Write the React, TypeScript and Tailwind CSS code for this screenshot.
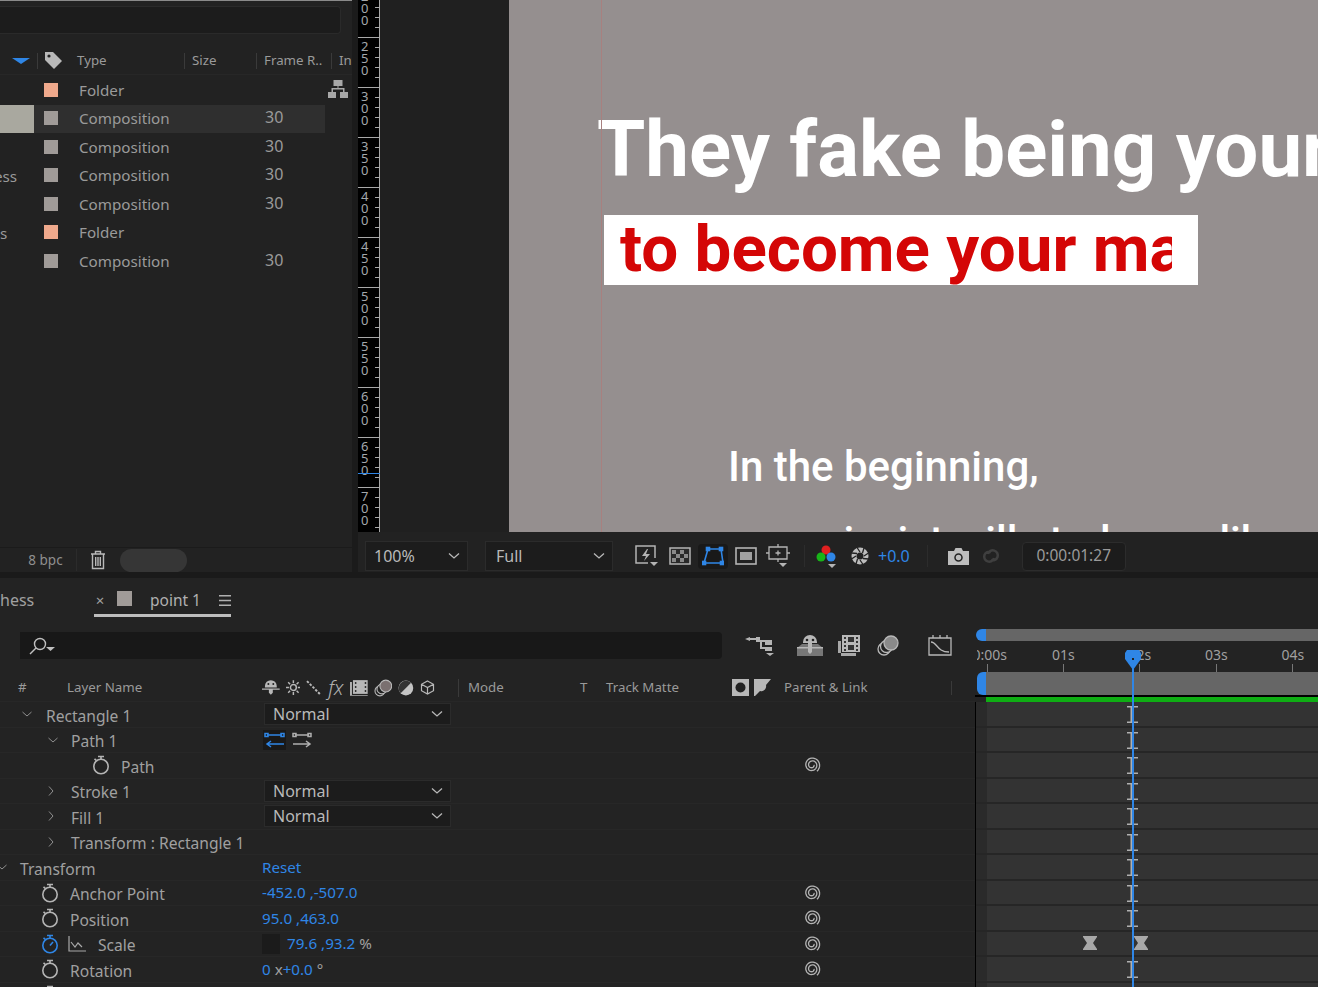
import type { ReactNode } from "react";

const GREY = "#b4b4b4";
const BLUE = "#2f86e6";

// spiral used by the pick whip column
const spiralD = Array.from({ length: 60 }, (_, i) => {
  const t = i / 59;
  const a = -0.9 + t * Math.PI * 4.3;
  const r = 8 - t * 6;
  return `${i === 0 ? "M" : "L"}${(9 + r * Math.cos(a)).toFixed(2)} ${(9 + r * Math.sin(-a)).toFixed(2)}`;
}).join(" ");

function Spiral() {
  return (
    <svg width="18" height="18" viewBox="0 0 18 18" fill="none" stroke={GREY} strokeWidth="1.3">
      <path d={spiralD} />
    </svg>
  );
}

function Stopwatch({ color = GREY }: { color?: string }) {
  return (
    <svg width="18" height="20" viewBox="0 0 18 20" fill="none" stroke={color} strokeWidth="1.6">
      <circle cx="9" cy="11.5" r="7.2" />
      <path d="M6 1.5h6M9 1.5v3M2.5 3.8l1.8 1.6" />
      {color !== GREY && <path d="M9 11.5l3-3.5" />}
    </svg>
  );
}

function Chevron({ dir, className = "" }: { dir: "down" | "right"; className?: string }) {
  return (
    <svg width="12" height="10" viewBox="0 0 12 10" fill="none" stroke="#8f8f8f" strokeWidth="1" className={className}>
      {dir === "down" ? <path d="M1.5 3l4.5 4 4.5-4" /> : <path d="M4 .5l4 4.5-4 4.5" />}
    </svg>
  );
}

function DropChevron() {
  return (
    <svg width="12" height="8" viewBox="0 0 12 8" fill="none" stroke="#b8b8b8" strokeWidth="1.3">
      <path d="M1 1.5l5 4.5 5-4.5" />
    </svg>
  );
}

function Select({ label, className }: { label: string; className: string }) {
  return (
    <div className={`flex items-center justify-between border border-[#2b2b2b] bg-[#1c1c1c] text-[16px] text-[#b9b9b9] ${className}`}>
      <span>{label}</span>
      <DropChevron />
    </div>
  );
}

// ------------------------------------------------------------------ project panel

const projectRows = [
  { cut: "", cutClass: "", type: "Folder", color: "bg-[#efa98c]", rate: "", tree: true },
  { cut: "", cutClass: "", type: "Composition", color: "bg-[#a09b98]", rate: "30", selected: true },
  { cut: "", cutClass: "", type: "Composition", color: "bg-[#a09b98]", rate: "30" },
  { cut: "ess", cutClass: "-ml-[6px]", type: "Composition", color: "bg-[#a09b98]", rate: "30" },
  { cut: "", cutClass: "", type: "Composition", color: "bg-[#a09b98]", rate: "30" },
  { cut: "s", cutClass: "", type: "Folder", color: "bg-[#efa98c]", rate: "" },
  { cut: "", cutClass: "", type: "Composition", color: "bg-[#a09b98]", rate: "30" },
];

function ProjectPanel() {
  return (
    <div className="flex w-[352px] flex-col border-t border-[#8a8a8a] bg-[#222222]">
      <div className="mt-[5px] h-[28px] w-[341px] rounded-r-sm border border-l-0 border-[#2a2a2a] bg-[#1c1c1c]" />
      <div className="mt-[13px] flex h-[28px] items-center overflow-hidden border-b border-[#272727] text-[13.3px] whitespace-nowrap text-[#9a9a9a]">
        <svg width="18" height="6" viewBox="0 0 18 6" className="ml-[12px] shrink-0">
          <path d="M0 0h18l-9 6z" fill={BLUE} />
        </svg>
        <div className="ml-[7px] h-[16px] w-px bg-[#3a3a3a]" />
        <svg width="19" height="19" viewBox="0 0 19 19" className="ml-[6px] shrink-0">
          <path d="M1 1h8l9 9-8 8-9-9z" fill="#b8b8b8" />
          <circle cx="5" cy="5" r="1.6" fill="#222" />
        </svg>
        <span className="ml-[14px] w-[107px] shrink-0">Type</span>
        <div className="h-[16px] w-px shrink-0 bg-[#3a3a3a]" />
        <span className="ml-[7px] w-[64px] shrink-0">Size</span>
        <div className="h-[16px] w-px shrink-0 bg-[#3a3a3a]" />
        <span className="ml-[7px] w-[67px] shrink-0">Frame R..</span>
        <div className="h-[16px] w-px shrink-0 bg-[#3a3a3a]" />
        <span className="ml-[7px]">In</span>
      </div>
      <div className="mt-[1px]">
        {projectRows.map((row, i) => (
          <div key={i} className="flex h-[28.5px] items-center text-[15.2px] text-[#9a9a9a]">
            <div className={`h-full w-[34px] shrink-0 overflow-hidden ${row.selected ? "bg-[#a9a89f]" : ""}`}>
              <div className={`leading-[28px] ${row.cutClass}`}>{row.cut}</div>
            </div>
            <div className={`flex h-full w-[291px] shrink-0 items-center ${row.selected ? "bg-[#2f2f2f]" : ""}`}>
              <div className={`-mt-[1px] ml-[10px] size-[14px] shrink-0 ${row.color}`} />
              <span className="ml-[21px] w-[186px] shrink-0">{row.type}</span>
              <span className="-mt-[3px] text-[16px]">{row.rate}</span>
            </div>
            {row.tree && (
              <svg width="20" height="18" viewBox="0 0 20 18" fill="#a8a8a8" className="-mt-[2px] ml-[3px] shrink-0">
                <path d="M5.500 0h9v6h-9zM0 12h8v6H0zM12 12h8v6h-8z" />
                <path d="M9.500 5h1v3h6v4h-1.500V9.500H5V12H3.500V8h6z" />
              </svg>
            )}
          </div>
        ))}
      </div>
      <div className="mt-auto flex h-[25px] items-center border-t border-[#1b1b1b]">
        <div className="ml-[15px] flex h-[22px] w-[62px] items-center justify-center border-r border-[#2b2b2b] text-[13.5px] text-[#8f8f8f]">
          8 bpc
        </div>
        <svg width="16" height="20" viewBox="0 0 16 20" fill="none" stroke="#b8b8b8" strokeWidth="1.4" className="ml-[13px]">
          <path d="M1 4h14M5.500 4V1.500h5V4M2.500 4v14.500h11V4M5.700 7v9M8 7v9M10.300 7v9" />
        </svg>
        <div className="ml-[14px] h-[23px] w-[67px] rounded-full bg-[#363636]" />
      </div>
    </div>
  );
}

// ------------------------------------------------------------------ viewer

const rulerMarks = ["200", "250", "300", "350", "400", "450", "500", "550", "600", "650", "700"];

function Ruler() {
  return (
    <div className="relative h-full w-[22px] shrink-0 overflow-hidden bg-black">
      <div className="-mt-[13px]">
        {rulerMarks.map((mark) => (
          <div key={mark} className="flex h-[50px] justify-between border-t border-r border-[#a8a8a8]">
            <div className="ml-[3px] pt-[2px] font-['Noto_Sans'] text-[13px] leading-[12px] text-[#a3a7ab]">
              {mark.split("").map((d, i) => (
                <div key={i}>{d}</div>
              ))}
            </div>
            <div className="flex flex-col items-end">
              {[0, 1, 2, 3].map((t) => (
                <div key={t} className="mt-[9px] h-px w-[4px] bg-[#a8a8a8]" />
              ))}
            </div>
          </div>
        ))}
      </div>
      <div className="absolute top-[473px] left-0 h-px w-full bg-[#2f86e6]" />
    </div>
  );
}

function Preview() {
  return (
    <div className="relative h-full flex-1 overflow-hidden bg-[#958f8f] font-['Roboto'] whitespace-nowrap">
      <div className="absolute top-0 left-[92px] h-full w-px bg-[#a8807f]" />
      <div className="ml-[88px] pt-[103px] text-[78px] leading-[94px] font-bold text-white">They fake being your</div>
      <div className="mt-[18px] ml-[95px] h-[70px] w-[594px] bg-white pl-[16px]">
        <div className="h-full w-[552px] overflow-hidden text-[65.5px] leading-[68px] font-bold text-[#d40606]">
          to become your manager
        </div>
      </div>
      <div className="mt-[157px] ml-[219px] text-[42px] leading-[50px] font-medium text-white">In the beginning,</div>
      <div className="mt-[25px] ml-[219px] text-[42px] leading-[50px] font-medium text-white">a narcissist will study you like a</div>
    </div>
  );
}

function ViewerToolbar() {
  return (
    <div className="flex h-[40px] items-center bg-[#222222] pt-[8px] font-['Noto_Sans'] whitespace-nowrap">
      <Select label="100%" className="ml-[7px] h-[30px] w-[103px] pr-[7px] pl-[8px]" />
      <Select label="Full" className="ml-[17px] h-[30px] w-[128px] pr-[7px] pl-[10px]" />
      <svg width="24" height="24" viewBox="0 0 24 24" fill="none" stroke={GREY} strokeWidth="1.500" className="ml-[21px]">
        <path d="M14 19H2V2h19v12" />
        <path d="M13 5l-5 7h4l-2 5 6-7h-4l2-5z" fill={GREY} stroke="none" />
        <path d="M16 18h8l-4 4z" fill={GREY} stroke="none" />
      </svg>
      <svg width="22" height="18" viewBox="0 0 22 18" className="ml-[11px]">
        <rect x="1" y="1" width="20" height="16" fill="#2a2a2a" stroke={GREY} strokeWidth="1.5" />
        <path d="M3 3h4v4H3zM11 3h4v4h-4zM7 7h4v4H7zM15 7h4v4h-4zM3 11h4v4H3zM11 11h4v4h-4z" fill="#8a8a8a" />
      </svg>
      <div className="ml-[7px] flex h-[25px] w-[30px] items-center justify-center rounded-sm bg-[#191919]">
        <svg width="22" height="20" viewBox="0 0 22 20" fill="none" stroke={BLUE} strokeWidth="1.600">
          <path d="M6 3h13l2 14H2z" />
          <g fill={BLUE}>
            <rect x="4.500" y="1.500" width="3" height="3" />
            <rect x="17.500" y="1.500" width="3" height="3" />
            <rect x="0.500" y="15.500" width="3" height="3" />
            <rect x="18.500" y="15.500" width="3" height="3" />
          </g>
        </svg>
      </div>
      <svg width="22" height="18" viewBox="0 0 22 18" className="ml-[7px]">
        <rect x="1" y="1" width="20" height="16" fill="none" stroke={GREY} strokeWidth="1.600" />
        <rect x="5" y="5" width="12" height="8" fill="#a0a0a0" />
      </svg>
      <svg width="24" height="24" viewBox="0 0 24 24" fill="none" stroke={GREY} strokeWidth="1.300" className="ml-[9px]">
        <path d="M3 3h18v12H3zM12 0v3M12 15v3M0 9h3M21 9h3M9.500 9h5M12 6.500v5" />
        <path d="M13 19h8l-4 4z" fill={GREY} stroke="none" />
      </svg>
      <div className="ml-[14px] h-[22px] w-px bg-[#2c2c2c]" />
      <svg width="24" height="24" viewBox="0 0 24 24" className="ml-[10px]">
        <circle cx="11" cy="6" r="4.500" fill="#e02020" />
        <circle cx="6" cy="13" r="4.500" fill="#18b418" />
        <circle cx="16" cy="13" r="4.500" fill="#2f86e6" />
        <path d="M13 20h8l-4 4z" fill={GREY} />
      </svg>
      <svg width="18" height="18" viewBox="0 0 18 18" className="ml-[12px]">
        <circle cx="9" cy="9" r="8.500" fill="#bdbdbd" />
        <path d="M9 5L6 .5M13 9l4.500-3M9 13l3 4.500M5 9l-4.500 3M6 6.500L.5 6M12 11.500l5.500.5M11.500 6L13 1M6.500 12L5 17" stroke="#222" strokeWidth="1.300" />
        <circle cx="9" cy="9" r="3.500" fill="#222" />
      </svg>
      <span className="ml-[9px] text-[16px] text-[#2f86e6]">+0.0</span>
      <div className="ml-[17px] h-[22px] w-px bg-[#2c2c2c]" />
      <svg width="21" height="17" viewBox="0 0 21 17" className="ml-[20px]">
        <path d="M0 3h6l1.500-3h6L15 3h6v14H0z" fill="#bdbdbd" />
        <circle cx="10.500" cy="9.500" r="3.500" fill="none" stroke="#222" strokeWidth="1.500" />
      </svg>
      <svg width="22" height="20" viewBox="0 0 22 20" fill="none" stroke="#3f3f3f" strokeWidth="2.500" className="ml-[11px]">
        <path d="M8 8a5 5 0 1 1 3 6M14 12a5 5 0 1 1-3-6" />
      </svg>
      <div className="ml-[20px] flex h-[29px] w-[104px] items-center justify-center rounded-sm border border-[#2c2c2c] bg-[#1c1c1c] text-[15.500px] text-[#9a9a9a]">
        0:00:01:27
      </div>
    </div>
  );
}

// ------------------------------------------------------------------ timeline

type LayerRow = {
  label: string;
  pad: string;
  textMl: string;
  chevron?: "down" | "right";
  chevronClass?: string;
  watch?: boolean;
  graph?: boolean;
  value?: ReactNode;
  spiral?: boolean;
};

const blue = "text-[#2f86e6]";

function PathButtons() {
  return (
    <div className="ml-[1px] flex gap-[5px]">
      <svg width="23" height="20" viewBox="0 0 23 20" className="bg-[#191919]">
        <g fill="none" stroke={BLUE} strokeWidth="1.500">
          <path d="M4 5h15" />
          <rect x="2" y="3.500" width="3" height="3" />
          <rect x="18" y="3.500" width="3" height="3" />
          <path d="M21 14H4M8 11l-4 3 4 3" />
        </g>
      </svg>
      <svg width="22" height="20" viewBox="0 0 22 20">
        <g fill="none" stroke="#b0b0b0" strokeWidth="1.500">
          <path d="M4 5h14" />
          <rect x="2" y="3.500" width="3" height="3" />
          <rect x="17" y="3.500" width="3" height="3" />
          <path d="M2 14h17M15 11l4 3-4 3" />
        </g>
      </svg>
    </div>
  );
}

const layerRows: LayerRow[] = [
  { label: "Rectangle 1", pad: "pl-[21px]", textMl: "ml-[13px]", chevron: "down", value: <Select label="Normal" className="ml-[2px] h-[22px] w-[187px] pr-[7px] pl-[8px]" /> },
  { label: "Path 1", pad: "pl-[47px]", textMl: "ml-[12px]", chevron: "down", value: <PathButtons /> },
  { label: "Path", pad: "pl-[92px]", textMl: "ml-[11px]", watch: true, spiral: true },
  { label: "Stroke 1", pad: "pl-[45px]", textMl: "ml-[14px]", chevron: "right", value: <Select label="Normal" className="ml-[2px] h-[22px] w-[187px] pr-[7px] pl-[8px]" /> },
  { label: "Fill 1", pad: "pl-[45px]", textMl: "ml-[14px]", chevron: "right", value: <Select label="Normal" className="ml-[2px] h-[22px] w-[187px] pr-[7px] pl-[8px]" /> },
  { label: "Transform : Rectangle 1", pad: "pl-[45px]", textMl: "ml-[14px]", chevron: "right" },
  { label: "Transform", pad: "pl-0", textMl: "ml-[12px]", chevron: "down", chevronClass: "-ml-[4px]", value: <span className={blue}>Reset</span> },
  { label: "Anchor Point", pad: "pl-[41px]", textMl: "ml-[11px]", watch: true, spiral: true, value: <span className={blue}>-452.0 ,-507.0</span> },
  { label: "Position", pad: "pl-[41px]", textMl: "ml-[11px]", watch: true, spiral: true, value: <span className={blue}>95.0 ,463.0</span> },
  {
    label: "Scale",
    pad: "pl-[41px]",
    textMl: "ml-[12px]",
    watch: true,
    graph: true,
    spiral: true,
    value: (
      <div className="flex items-center">
        <div className="h-[20px] w-[18px] bg-[#1b1b1b]" />
        <span className={`ml-[7px] ${blue}`}>79.6 ,93.2</span>
        <span className="ml-[4px] text-[#a0a0a0]">%</span>
      </div>
    ),
  },
  {
    label: "Rotation",
    pad: "pl-[41px]",
    textMl: "ml-[11px]",
    watch: true,
    spiral: true,
    value: (
      <span>
        <span className={blue}>0</span>
        <span className="text-[#a0a0a0]"> x</span>
        <span className={blue}>+0.0</span>
        <span className="text-[#a0a0a0]"> °</span>
      </span>
    ),
  },
  { label: "", pad: "pl-[41px]", textMl: "ml-[11px]", watch: true },
];

function LayerRowView({ row }: { row: LayerRow }) {
  const isBlueWatch = row.graph;
  return (
    <div className="flex h-[25.5px] shrink-0 items-center border-b border-[#272727] text-[15.6px] text-[#a0a0a0]">
      <div className={`flex h-full w-[262px] shrink-0 items-center ${row.pad}`}>
        {row.chevron && <Chevron dir={row.chevron} className={row.chevronClass} />}
        {row.watch && <Stopwatch color={isBlueWatch ? BLUE : GREY} />}
        {row.graph && (
          <svg width="18" height="16" viewBox="0 0 18 16" fill="none" stroke="#a8a8a8" strokeWidth="1.200" className="ml-[9px]">
            <path d="M1 0v15h17M3 6l4 5 3-4 4 4" />
          </svg>
        )}
        <span className={`${row.textMl} pt-[4px] whitespace-nowrap`}>{row.label}</span>
      </div>
      <div className="flex h-full w-[541px] shrink-0 items-center text-[15.2px]">{row.value}</div>
      <div className="flex w-[18px] shrink-0 items-center">{row.spiral && <Spiral />}</div>
    </div>
  );
}

function IBeam() {
  return (
    <svg width="11" height="17" viewBox="0 0 11 17">
      <path d="M0 0h11v1.500H7V15.500h4V17H0v-1.500h3.500V1.500H0z" fill="#b0b0b0" />
    </svg>
  );
}

function Hourglass() {
  return (
    <svg width="14" height="14" viewBox="0 0 14 14">
      <path d="M0 0h14v1L10 7l4 6v1H0v-1l4-6-4-6z" fill="#a8a8a8" />
    </svg>
  );
}

function TrackRow({ scale }: { scale?: boolean }) {
  return (
    <div className="flex h-[25.5px] shrink-0 items-center border-b-2 border-[#262626] bg-[#333333]">
      <div className="h-full w-[11px] shrink-0 bg-[#2a2a2a]" />
      {scale ? (
        <div className="ml-[96px] flex">
          <Hourglass />
          <div className="ml-[37px]">
            <Hourglass />
          </div>
        </div>
      ) : (
        <div className="mt-[2px] ml-[140px] flex">
          <IBeam />
        </div>
      )}
    </div>
  );
}

function TimelineLeft() {
  return (
    <div className="flex w-[975px] shrink-0 flex-col">
      <div className="flex h-[54px] shrink-0 items-start pt-[12px]">
        <div className="ml-[20px] flex h-[27px] w-[702px] items-center rounded-r-sm bg-[#181818] pl-[9px]">
          <svg width="26" height="18" viewBox="0 0 26 18" fill="none" stroke="#c0c0c0" strokeWidth="1.400">
            <circle cx="11" cy="7" r="5.500" />
            <path d="M7 11l-6 6" />
            <path d="M17 10h9l-4.500 4z" fill="#c0c0c0" stroke="none" />
          </svg>
        </div>
        <svg width="30" height="24" viewBox="0 0 30 24" fill="#b4b4b4" className="mt-[2px] ml-[23px]">
          <path d="M0 5l5-2v1h6V3h4v5h-4V6H5v1zM15 6h5v2h-5zM15 4v11h5v-2h-3V8h-2M20 6h7v5h-7zM20 13h7v4h-7zM21 19h8l-4 3z" />
        </svg>
        <svg width="26" height="22" viewBox="0 0 26 22" className="mt-[3px] ml-[22px]">
          <path d="M0 13l5-4h16l5 4v8H0z" fill="#777" />
          <path d="M13 0a7 7 0 0 1 7 7v1H6V7a7 7 0 0 1 7-7z" fill="#b8b8b8" />
          <path d="M11 8h4v9l-2 2-2-2zM0 12h26v1.500H0z" fill="#b8b8b8" />
          <circle cx="10" cy="5" r="1.300" fill="#222" />
          <circle cx="16" cy="5" r="1.300" fill="#222" />
        </svg>
        <svg width="22" height="21" viewBox="0 0 22 21" className="mt-[3px] ml-[15px]">
          <path d="M0 6h3v15h15v-3H0z" fill="#a8a8a8" />
          <path d="M4 0h18v17H4z" fill="#b8b8b8" />
          <path d="M6 2h2v2H6zM6 6h2v2H6zM6 10h2v2H6zM6 14h2v2H6zM18 2h2v2h-2zM18 6h2v2h-2zM18 10h2v2h-2zM18 14h2v2h-2zM10 2h6v5h-6zM10 10h6v5h-6z" fill="#333" />
        </svg>
        <svg width="22" height="21" viewBox="0 0 22 21" fill="none" stroke="#b8b8b8" strokeWidth="1.300" className="mt-[3px] ml-[17px]">
          <circle cx="7" cy="14" r="6" />
          <circle cx="9.500" cy="11.500" r="6" fill="#222" />
          <circle cx="14" cy="8" r="7" fill="#8a8a8a" />
        </svg>
        <svg width="24" height="21" viewBox="0 0 24 21" fill="none" stroke="#b8b8b8" strokeWidth="1.300" className="mt-[3px] ml-[29px]">
          <path d="M1 3h22v17H1zM5 0v3M12 0v3M19 0v3" />
          <path d="M3 7c6 0 6 10 18 10" />
        </svg>
      </div>
      <div className="flex h-[28px] shrink-0 items-center border-b border-[#272727] text-[13.3px] whitespace-nowrap text-[#9a9a9a]">
        <span className="ml-[18px] w-[49px]">#</span>
        <span className="w-[195px]">Layer Name</span>
        <div className="flex w-[173px] items-center gap-[6px]">
          <svg width="18" height="15" viewBox="0 0 18 15" fill="#b8b8b8">
            <path d="M9 0a6 6 0 0 1 6 6v1.500H3V6a6 6 0 0 1 6-6zM0 8.500h18v1.300H0zM7 9.800h4v3l-2 2-2-2z" />
            <circle cx="6.500" cy="4" r="1" fill="#222" />
            <circle cx="11.500" cy="4" r="1" fill="#222" />
          </svg>
          <svg width="15" height="15" viewBox="0 0 15 15" fill="none" stroke="#b8b8b8" strokeWidth="1.500">
            <circle cx="7.500" cy="7.500" r="3" />
            <path d="M7.500 0v3M7.500 12v3M0 7.500h3M12 7.500h3M2.200 2.200l2 2M10.800 10.800l2 2M12.800 2.200l-2 2M4.200 10.800l-2 2" />
          </svg>
          <svg width="16" height="16" viewBox="0 0 16 16" stroke="#b8b8b8" strokeWidth="2" strokeDasharray="2.500 1.500">
            <path d="M1 1l14 14" />
          </svg>
          <span className="w-[16px] text-[20px] leading-[16px] font-light text-[#b0b0b0] italic">fx</span>
          <svg width="18" height="16" viewBox="0 0 18 16">
            <path d="M0 2h2v13h16v1H0z" fill="#b0b0b0" />
            <path d="M3 0h15v14H3z" fill="#b8b8b8" />
            <path d="M5 2h1.500v2H5zM5 6h1.500v2H5zM5 10h1.500v2H5zM15 2h1.500v2H15zM15 6h1.500v2H15zM15 10h1.500v2H15z" fill="#333" />
          </svg>
          <svg width="19" height="18" viewBox="0 0 19 18" fill="none" stroke="#b8b8b8" strokeWidth="1.100">
            <circle cx="6" cy="12" r="5" />
            <circle cx="8" cy="10" r="5" fill="#222" />
            <circle cx="12" cy="7" r="6" fill="#7a7070" />
          </svg>
          <svg width="16" height="16" viewBox="0 0 16 16">
            <circle cx="8" cy="8" r="7.500" fill="#c4c4c4" />
            <path d="M2.700 13.300A7.500 7.500 0 0 1 13.300 2.700z" fill="#333" />
          </svg>
          <svg width="15" height="15" viewBox="0 0 15 15" fill="none" stroke="#b8b8b8" strokeWidth="1.200" className="shrink-0">
            <path d="M7.500 1l6 3.300v6.400l-6 3.300-6-3.300V4.300zM1.500 4.300l6 3.200 6-3.200M7.500 7.500V14" />
          </svg>
        </div>
        <div className="ml-[23px] h-[18px] w-px bg-[#3a3a3a]" />
        <span className="ml-[9px] w-[112px]">Mode</span>
        <span className="w-[26px]">T</span>
        <span className="w-[126px]">Track Matte</span>
        <svg width="17" height="17" viewBox="0 0 17 17">
          <rect width="17" height="17" fill="#b8b8b8" />
          <circle cx="8.500" cy="8.500" r="5" fill="#222" />
        </svg>
        <svg width="17" height="17" viewBox="0 0 17 17" className="ml-[5px]">
          <path d="M0 0h17L12 6a5 5 0 0 1-6 6L1 17H0z" fill="#b8b8b8" />
        </svg>
        <span className="ml-[13px] w-[167px]">Parent &amp; Link</span>
        <div className="h-[14px] w-px bg-[#3a3a3a]" />
      </div>
      {layerRows.map((row, i) => (
        <LayerRowView key={i} row={row} />
      ))}
    </div>
  );
}

function TimelineRight() {
  const ticks = ["01s", "02s", "03s", "04s"];
  return (
    <div className="relative flex min-w-0 flex-1 flex-col overflow-hidden">
      <div className="mt-[9px] flex h-[12px] shrink-0">
        <div className="ml-[1px] w-[10px] rounded-l-full bg-[#2f86e6]" />
        <div className="flex-1 bg-[#666666]" />
      </div>
      <div className="flex h-[31px] shrink-0 text-[14px] text-[#a0a0a0]">
        <div className="w-[50px] shrink-0">
          <div className="ml-[2px] flex h-[23px] w-[30px] justify-end overflow-hidden pt-[4px] leading-[20px]">
            <span className="shrink-0">0:00s</span>
          </div>
          <div className="ml-[12px] h-[8px] w-px bg-[#777777]" />
        </div>
        {ticks.map((t) => (
          <div key={t} className="flex w-[76.5px] shrink-0 flex-col items-center">
            <div className="h-[23px] pt-[4px] leading-[20px]">{t}</div>
            <div className="h-[8px] w-px bg-[#777777]" />
          </div>
        ))}
      </div>
      <div className="flex h-[23px] shrink-0">
        <div className="ml-[2px] w-[9px] rounded-l-md bg-[#2f86e6]" />
        <div className="flex-1 bg-[#666666]" />
      </div>
      <div className="h-[2px] shrink-0 bg-black" />
      <div className="ml-[11px] h-[5px] shrink-0 bg-[#0fae14]" />
      <div className="flex flex-col border-l border-black">
        {layerRows.map((row, i) => (
          <TrackRow key={i} scale={row.label === "Scale"} />
        ))}
      </div>
      {/* playhead sits over the tracks */}
      <div className="absolute top-[30px] bottom-0 left-[149px] w-[18px]">
        <svg width="18" height="20" viewBox="0 0 18 20" className="absolute top-0 left-0">
          <path d="M3 0h12l2 3v6l-8 11-8-11V3z" fill={BLUE} />
          <rect x="8" y="8" width="2" height="2" fill="#222" />
        </svg>
        <div className="absolute top-[10px] bottom-0 left-[8px] w-[2px] bg-[#2f86e6]" />
      </div>
    </div>
  );
}

function Timeline() {
  return (
    <div className="flex min-h-0 flex-1 flex-col overflow-hidden bg-[#232323] font-['Noto_Sans']">
      <div className="flex h-[42px] shrink-0 items-start text-[16px] whitespace-nowrap text-[#a0a0a0]">
        <span className="w-[94px] shrink-0 pt-[10px] leading-[24px]">hess</span>
        <div className="flex h-[39px] w-[137px] shrink-0 items-center border-b-[3px] border-[#bdbdbd] pt-[9px]">
          <span className="ml-[1px] w-[10px] text-center text-[15px] leading-none">×</span>
          <div className="-mt-[5px] ml-[12px] size-[15px] shrink-0 bg-[#a09b98]" />
          <span className="ml-[18px] w-[69px] text-[15.5px] text-[#b0b0b0]">point 1</span>
          <svg width="12" height="11" viewBox="0 0 12 11" fill="#b0b0b0">
            <path d="M0 0h12v1.500H0zM0 4.700h12v1.500H0zM0 9.500h12V11H0z" />
          </svg>
        </div>
      </div>
      <div className="flex min-h-0 flex-1">
        <TimelineLeft />
        <TimelineRight />
      </div>
    </div>
  );
}

export default function App() {
  return (
    <div className="flex h-[987px] w-[1318px] flex-col overflow-hidden bg-[#222222] font-['Noto_Sans']">
      <div className="flex h-[572px] shrink-0">
        <ProjectPanel />
        <div className="w-[6px] shrink-0 bg-[#1b1b1b]" />
        <div className="flex min-w-0 flex-1 flex-col">
          <div className="flex h-[532px] shrink-0">
            <Ruler />
            <div className="h-full w-[129px] shrink-0 bg-[#202020]" />
            <Preview />
          </div>
          <ViewerToolbar />
        </div>
      </div>
      <div className="h-[6px] shrink-0 bg-[#1a1a1a]" />
      <Timeline />
    </div>
  );
}
